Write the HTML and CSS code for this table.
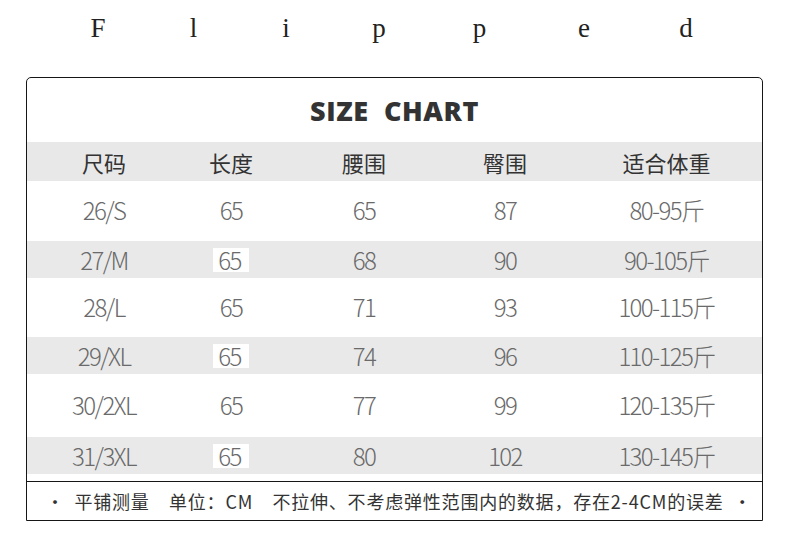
FILE: index.html
```html
<!DOCTYPE html>
<html lang="zh-CN">
<head>
<meta charset="utf-8">
<title>Flipped Size Chart</title>
<link rel="stylesheet" href="styles.css">
</head>
<body>
<div class="page">
  <div class="brand">
    <span>F</span><span>l</span><span>i</span><span>p</span><span>p</span><span>e</span><span>d</span>
  </div>
  <div class="chart">
    <div class="title">SIZE&nbsp; CHART</div>
    <div class="row head">
      <div>尺码</div><div>长度</div><div>腰围</div><div>臀围</div><div class="last">适合体重</div>
    </div>
    <div class="row tall r1">
      <div>26/S</div><div>65</div><div>65</div><div>87</div><div class="last">80-95斤</div>
    </div>
    <div class="row gray">
      <div>27/M</div><div><span class="chip">65</span></div><div>68</div><div>90</div><div class="last">90-105斤</div>
    </div>
    <div class="row tall r3">
      <div>28/L</div><div>65</div><div>71</div><div>93</div><div class="last">100-115斤</div>
    </div>
    <div class="row gray">
      <div>29/XL</div><div><span class="chip">65</span></div><div>74</div><div>96</div><div class="last">110-125斤</div>
    </div>
    <div class="row tall r5">
      <div>30/2XL</div><div>65</div><div>77</div><div>99</div><div class="last">120-135斤</div>
    </div>
    <div class="row gray">
      <div>31/3XL</div><div><span class="chip">65</span></div><div>80</div><div>102</div><div class="last">130-145斤</div>
    </div>
    <div class="spacer"></div>
    <div class="note">·&nbsp; 平铺测量&nbsp;&nbsp;&nbsp; 单位：CM&nbsp;&nbsp;&nbsp; 不拉伸、不考虑弹性范围内的数据，存在2-4CM的误差&nbsp; ·</div>
  </div>
</div>
</body>
</html>
```

FILE: styles.css
```css
html, body {
  margin: 0;
  padding: 0;
  background: #ffffff;
}

.page {
  width: 790px;
  height: 557px;
  overflow: hidden;
}

.brand {
  display: grid;
  grid-template-columns: 96px 95px 90px 96px 105px 104px 100px;
  margin-left: 50px;
  height: 77px;
  padding-top: 11px;
  box-sizing: border-box;
  font-family: "Liberation Serif", "DejaVu Serif", serif;
  font-size: 27px;
  color: #222;
  line-height: 34px;
}

.brand span {
  text-align: center;
}

.chart {
  margin-left: 26px;
  width: 737px;
  border: 1.5px solid #161616;
  border-radius: 5px 5px 0 0;
  box-sizing: border-box;
}

.title {
  height: 64px;
  display: flex;
  align-items: center;
  justify-content: center;
  font-family: "Open Sans", "DejaVu Sans", sans-serif;
  font-weight: 800;
  font-size: 27px;
  letter-spacing: 0.6px;
  color: #333;
  padding-top: 1px;
  box-sizing: border-box;
}

.row {
  display: grid;
  grid-template-columns: 154px 100px 166px 116px 1fr;
  align-items: center;
  font-family: "Noto Sans CJK SC", "Noto Sans", sans-serif;
  font-weight: 300;
  font-size: 24px;
  color: #6a6a6a;
  letter-spacing: -1.6px;
}

.row > div {
  text-align: center;
}

.row > .last {
  padding-left: 8px;
}

.head {
  height: 39px;
  background: #e8e8e8;
  color: #333;
  letter-spacing: 0;
  font-weight: 400;
  font-size: 22px;
}

.tall {
  height: 60px;
  padding-bottom: 3px;
  box-sizing: border-box;
}

.r3 {
  height: 59px;
}

.r5 {
  height: 63px;
}

.gray {
  height: 37px;
  background: #e9e9e9;
}

.chip {
  background: #ffffff;
  padding: 0 8px 0 5px;
  display: inline-block;
  line-height: 24px;
}

.spacer {
  height: 7px;
}

.note {
  border-top: 1.5px solid #161616;
  height: 39px;
  display: flex;
  align-items: center;
  padding-left: 19px;
  font-family: "Noto Sans CJK SC", "Noto Sans", sans-serif;
  font-size: 18px;
  letter-spacing: 0.8px;
  color: #333;
  box-sizing: border-box;
  white-space: nowrap;
}
```
